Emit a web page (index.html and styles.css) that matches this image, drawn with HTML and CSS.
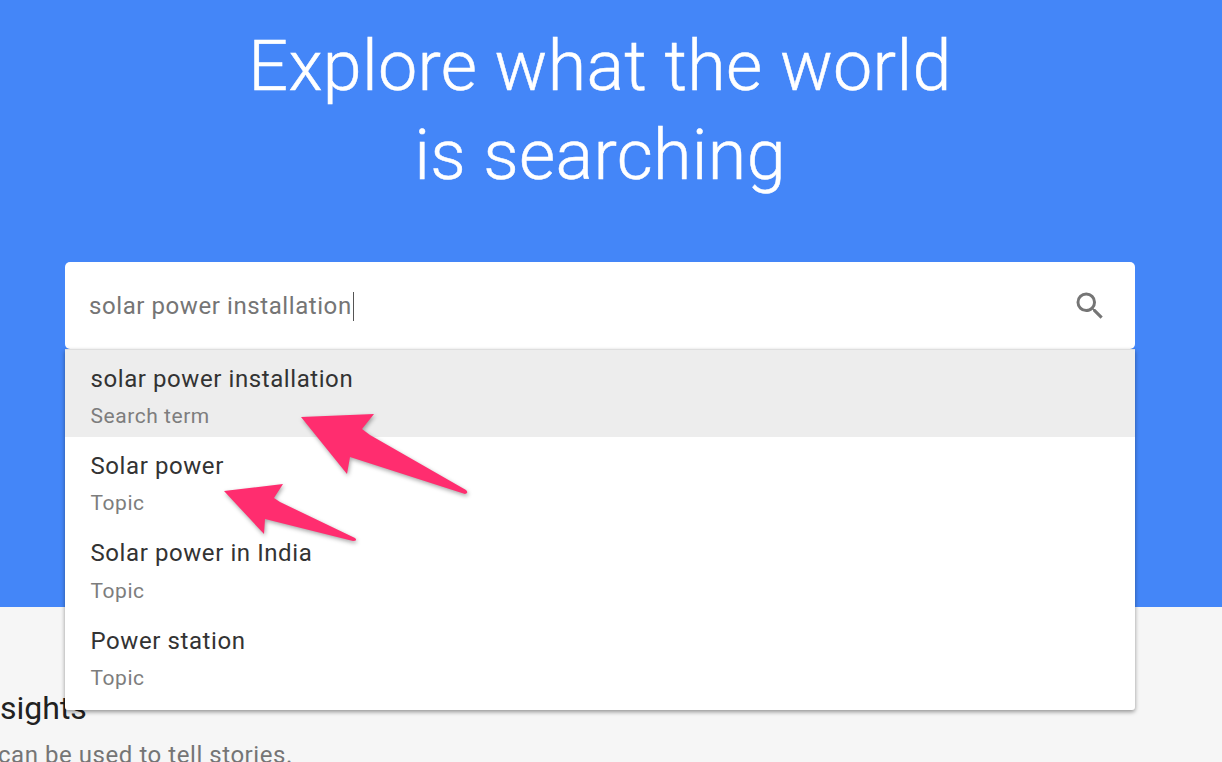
FILE: index.html
```html
<!DOCTYPE html>
<html lang="en">
<head>
    <meta charset="UTF-8">
    <meta name="viewport" content="width=device-width, initial-scale=1.0">
    <title>Explore what the world is searching</title>
    <link rel="stylesheet" href="styles.css">
</head>
<body>

    <section class="hero">
        <h1>Explore what the world<br>is searching</h1>

        <div class="search-wrap">
            <div class="search-box">
                <span class="search-text">solar power installation</span>
                <svg class="search-icon" viewBox="0 0 24 24"><path d="M15.5 14h-.79l-.28-.27A6.471 6.471 0 0 0 16 9.5 6.5 6.5 0 1 0 9.5 16c1.61 0 3.09-.59 4.27-1.57l.27.28v.79l5 4.99L20.49 19l-4.99-5zm-6 0C7.01 14 5 11.99 5 9.5S7.01 5 9.5 5 14 7.01 14 9.5 11.99 14 9.5 14z"/></svg>
            </div>

            <ul class="suggestions">
                <li class="suggestion active">
                    <div class="name">solar power installation</div>
                    <div class="type">Search term</div>
                </li>
                <li class="suggestion">
                    <div class="name">Solar power</div>
                    <div class="type">Topic</div>
                </li>
                <li class="suggestion">
                    <div class="name">Solar power in India</div>
                    <div class="type">Topic</div>
                </li>
                <li class="suggestion">
                    <div class="name">Power station</div>
                    <div class="type">Topic</div>
                </li>
            </ul>
        </div>
    </section>

    <section class="insights">
        <h2>sights</h2>
        <p>can be used to tell stories.</p>
    </section>

    <!-- pink annotation arrows -->
    <svg class="arrows" viewBox="0 0 1222 762">
        <path d="M301 417 374 414 362 429 370 435 466 490Q469 493 465 494L350 457 347 474Z"/>
        <path d="M224 491 283 484 274 498 280 502 355 538Q358 541 353 541L265 519 264 534Z"/>
    </svg>

</body>
</html>
```

FILE: styles.css
```css
* {
    box-sizing: border-box;
}
html, body {
    height: 100%;
}
body {
    margin: 0;
    background: #f6f6f6;
    font-family: Roboto, "Liberation Sans", sans-serif;
    overflow: hidden;
}
.hero {
    position: relative;
    height: 607px;
    padding: 22px 22px 0 0;
    background: #4486f8;
}
.hero h1 {
    margin: 0;
    font-size: 70px;
    font-weight: 300;
    letter-spacing: 0.3px;
    line-height: 89px;
    color: #fff;
    text-align: center;
    -webkit-text-stroke: 0.5px #fff;
}
.search-wrap {
    position: absolute;
    top: 262px;
    left: 65px;
    width: 1070px;
}
.search-box {
    display: flex;
    align-items: center;
    justify-content: space-between;
    height: 87px;
    padding: 0 27px 0 24px;
    background: #fff;
    border-radius: 5px;
}
.search-text {
    margin-top: 1px;
    padding-right: 1px;
    border-right: 1px solid #555;
    font-size: 24px;
    letter-spacing: 0.58px;
    line-height: 29px;
    color: #757575;
}
.search-icon {
    width: 36px;
    height: 36px;
    fill: #757575;
}
.suggestions {
    margin: 0;
    padding: 0 0 10.4px;
    list-style: none;
    background: #fff;
    border-top: 1px solid #dedede;
    border-radius: 0 0 3px 3px;
    box-shadow: 0 2px 4px rgba(0, 0, 0, 0.4);
}
.suggestion {
    height: 87.4px;
    padding: 13.65px 25.5px 0;
}
.suggestion.active {
    background: #ededed;
}
.name {
    font-size: 24px;
    letter-spacing: 0.58px;
    line-height: 30px;
    color: #333;
}
.type {
    margin-top: 8.25px;
    font-size: 21px;
    letter-spacing: 0.55px;
    line-height: 28px;
    color: #7d7d7d;
}
.insights {
    padding-top: 83px;
}
.insights h2 {
    margin: 0;
    font-size: 32px;
    font-weight: 400;
    line-height: 36px;
    color: #212121;
}
.insights p {
    margin: 14px 0 0 -2px;
    font-size: 24px;
    letter-spacing: 0.55px;
    line-height: 30px;
    color: #757575;
}
.arrows {
    position: absolute;
    top: 0;
    left: 0;
    width: 1222px;
    height: 762px;
    fill: #ff2d6f;
    filter: drop-shadow(1px 2px 2px rgba(0, 0, 0, 0.35));
}
```
